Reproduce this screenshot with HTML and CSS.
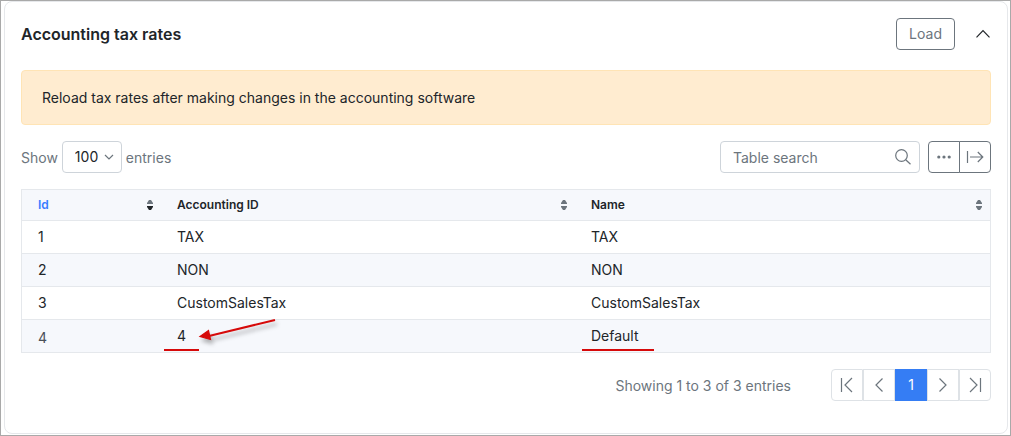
FILE: index.html
```html
<!DOCTYPE html>
<html lang="en">
<head>
<meta charset="utf-8">
<meta name="viewport" content="width=device-width, initial-scale=1">
<title>Accounting tax rates</title>
<link rel="stylesheet" href="styles.css">
</head>
<body>
<main class="frame">
  <section class="card">
    <header class="card-header">
      <h2 class="card-title">Accounting tax rates</h2>
      <div class="card-actions">
        <button type="button" class="btn load-btn">Load</button>
        <button type="button" class="collapse-btn" aria-label="Collapse">
          <svg width="16" height="16" viewBox="0 0 16 16"><path d="M1.500 11.300 8 4.500l6.500 6.800"/></svg>
        </button>
      </div>
    </header>

    <div class="alert">Reload tax rates after making changes in the accounting software</div>

    <div class="toolbar">
      <div class="length">
        <label class="caption" for="length">Show</label>
        <span class="select-wrap">
          <select id="length" class="select"><option>100</option></select>
          <svg class="select-arrow" width="10" height="10" viewBox="0 0 10 10"><path d="m1 3 4 4 4-4"/></svg>
        </span>
        <span class="caption">entries</span>
      </div>
      <div class="tools">
        <div class="search">
          <input type="search" class="search-input" placeholder="Table search" aria-label="Table search">
          <svg class="search-icon" width="16" height="16" viewBox="0 0 16 16"><circle cx="6.500" cy="6.500" r="5.800"/><path d="m10.700 10.700 4.800 4.500"/></svg>
        </div>
        <div class="btn-group">
          <button type="button" class="btn icon-btn" aria-label="More">
            <svg class="dots" width="16" height="16" viewBox="0 0 16 16"><circle cx="2.800" cy="8" r="1.600"/><circle cx="8" cy="8" r="1.600"/><circle cx="13.200" cy="8" r="1.600"/></svg>
          </button>
          <button type="button" class="btn icon-btn" aria-label="Export">
            <svg width="18" height="16" viewBox="0 0 18 16"><path d="M1.500 2v12M4 8h13M11.800 3l5 5-5 5"/></svg>
          </button>
        </div>
      </div>
    </div>

    <table class="table">
      <colgroup><col class="col-id"><col class="col-acc"><col class="col-name"></colgroup>
      <thead>
        <tr>
          <th scope="col" class="sorted"><div class="th-inner">Id
            <svg class="sort" width="6" height="10" viewBox="0 0 6 10"><path d="M2 0h2l2 3v1H0V3z"/><path class="sort-active" d="M0 6h6v1l-2 3H2L0 7z"/></svg></div></th>
          <th scope="col"><div class="th-inner">Accounting ID
            <svg class="sort" width="6" height="10" viewBox="0 0 6 10"><path d="M2 0h2l2 3v1H0V3zM0 6h6v1l-2 3H2L0 7z"/></svg></div></th>
          <th scope="col"><div class="th-inner">Name
            <svg class="sort" width="6" height="10" viewBox="0 0 6 10"><path d="M2 0h2l2 3v1H0V3zM0 6h6v1l-2 3H2L0 7z"/></svg></div></th>
        </tr>
      </thead>
      <tbody>
        <tr><td>1</td><td>TAX</td><td>TAX</td></tr>
        <tr><td>2</td><td>NON</td><td>NON</td></tr>
        <tr><td>3</td><td>CustomSalesTax</td><td>CustomSalesTax</td></tr>
        <tr>
          <td class="low">4</td>
          <td class="marked">4
            <span class="underline underline-short"></span>
            <svg class="arrow" width="84" height="36" viewBox="0 0 84 36"><path class="arrow-line" d="M11 18 77 2"/><path class="arrow-head" d="M2 18.500 10.500 12.500 12.500 21.500z"/></svg>
          </td>
          <td class="marked">Default
            <span class="underline underline-long"></span>
          </td>
        </tr>
      </tbody>
    </table>

    <footer class="table-footer">
      <span class="caption">Showing 1 to 3 of 3 entries</span>
      <nav class="pagination" aria-label="Pages">
        <button type="button" class="page" aria-label="First"><svg width="16" height="16" viewBox="0 0 16 16"><path d="M2.500 1v14M13 1 6 8l7 7"/></svg></button>
        <button type="button" class="page" aria-label="Previous"><svg width="16" height="16" viewBox="0 0 16 16"><path d="M11.500 1.500 5 8l6.500 6.500"/></svg></button>
        <button type="button" class="page page-current" aria-current="page">1</button>
        <button type="button" class="page" aria-label="Next"><svg width="16" height="16" viewBox="0 0 16 16"><path d="M4.500 1.500 11 8l-6.500 6.500"/></svg></button>
        <button type="button" class="page" aria-label="Last"><svg width="16" height="16" viewBox="0 0 16 16"><path d="M13.500 1v14M3 1l7 7-7 7"/></svg></button>
      </nav>
    </footer>
  </section>
</main>
</body>
</html>
```
FILE: styles.css
```css
* { box-sizing: border-box; }

body {
  margin: 0;
  background: #fff;
  color: #212529;
  font: 400 14px/20px Inter, "Liberation Sans", sans-serif;
}

button, input, select { font: inherit; color: inherit; margin: 0; }

svg { display: block; fill: none; stroke: currentColor; stroke-width: 1.2; flex: none; }

.frame {
  min-height: 100vh;
  padding: 0 2px 1px 3px;
  border: 1px solid #a9a9a9;
}

.card {
  padding: 16px 16px 32px;
  border: 1px solid #e6e8eb;
  border-radius: 8px;
}

.card-header {
  display: flex;
  align-items: center;
  justify-content: space-between;
  margin-bottom: 20px;
}

.card-title { margin: 0; font-size: 16px; line-height: 20px; font-weight: 600; }

.card-actions { display: flex; align-items: center; gap: 20px; }

.btn {
  height: 32px;
  border: 1px solid #6c757d;
  border-radius: 4px;
  background: #fff;
  color: #6c757d;
}

.load-btn { padding: 0 12px; }

.collapse-btn { padding: 0; border: 0; background: none; color: #212529; }

.alert {
  margin-bottom: 16px;
  padding: 17px 20px 16px;
  border: 1px solid #ffe4b5;
  border-radius: 4px;
  background: #ffecd0;
}

.toolbar {
  display: flex;
  align-items: center;
  justify-content: space-between;
  margin-bottom: 16px;
  color: #6c757d;
}

.caption { padding-top: 2px; }

.length { display: flex; align-items: center; gap: 4px; }

.select-wrap { position: relative; color: #212529; }

.select {
  display: block;
  width: 60px;
  height: 32px;
  padding: 0 12px;
  border: 1px solid #ced4da;
  border-radius: 4px;
  background: #fff;
  appearance: none;
}

.select-arrow { position: absolute; top: 11px; right: 8px; color: #6c757d; pointer-events: none; }

.tools { display: flex; gap: 8px; }

.search { position: relative; }

.search-input {
  display: block;
  width: 200px;
  height: 32px;
  padding: 0 32px 0 12px;
  border: 1px solid #ced4da;
  border-radius: 4px;
  background: #fff;
  appearance: none;
}

.search-input::placeholder { color: #6c757d; opacity: 1; }

.search-icon { position: absolute; top: 8px; right: 9px; }

.btn-group { display: flex; }

.icon-btn { display: grid; place-items: center; width: 32px; padding: 0; }
.icon-btn:first-child { border-radius: 4px 0 0 4px; }
.icon-btn:last-child { margin-left: -1px; border-radius: 0 4px 4px 0; }

.dots { fill: currentColor; stroke: none; }

.table {
  width: 100%;
  margin-bottom: 16px;
  border: 1px solid #e5e8ec;
  border-spacing: 0;
  table-layout: fixed;
}

.col-id { width: 139px; }
.col-acc { width: 414px; }

.table th {
  height: 30px;
  padding: 0 8px 0 16px;
  background: #f6f8fc;
  font-size: 12px;
  font-weight: 600;
  text-align: left;
}

.table .sorted { color: #377dff; }

.th-inner { display: flex; align-items: center; justify-content: space-between; }

.sort { fill: #6c757d; stroke: none; }
.sort-active { fill: #212529; }

.table td {
  height: 33px;
  padding: 0 16px;
  border-top: 1px solid #e5e8ec;
}

.table tr:nth-child(even) td { background: #f6f8fc; }

.table .low { padding-top: 3px; color: #495057; }

.marked { position: relative; }

.underline { position: absolute; bottom: 1px; height: 2px; background: #d60a0a; }
.underline-short { left: 3px; width: 35px; }
.underline-long { left: 7px; width: 72px; }

.arrow {
  position: absolute;
  top: -2px;
  left: 37px;
  overflow: visible;
  filter: drop-shadow(2px 4px 2px rgba(0, 0, 0, 0.3));
}
.arrow-line { stroke: #d60a0a; stroke-width: 2; }
.arrow-head { fill: #d60a0a; stroke: #d60a0a; }

.table-footer {
  display: flex;
  align-items: center;
  justify-content: flex-end;
  gap: 40px;
  color: #6c757d;
}

.pagination { display: flex; }

.page {
  display: grid;
  place-items: center;
  width: 32px;
  height: 32px;
  padding: 0;
  border: 1px solid #dee2e6;
  background: #fff;
}
.page:first-child { border-radius: 4px 0 0 4px; }
.page:last-child { border-radius: 0 4px 4px 0; }

.page-current { border-color: #357df4; background: #357df4; color: #fff; }
```
